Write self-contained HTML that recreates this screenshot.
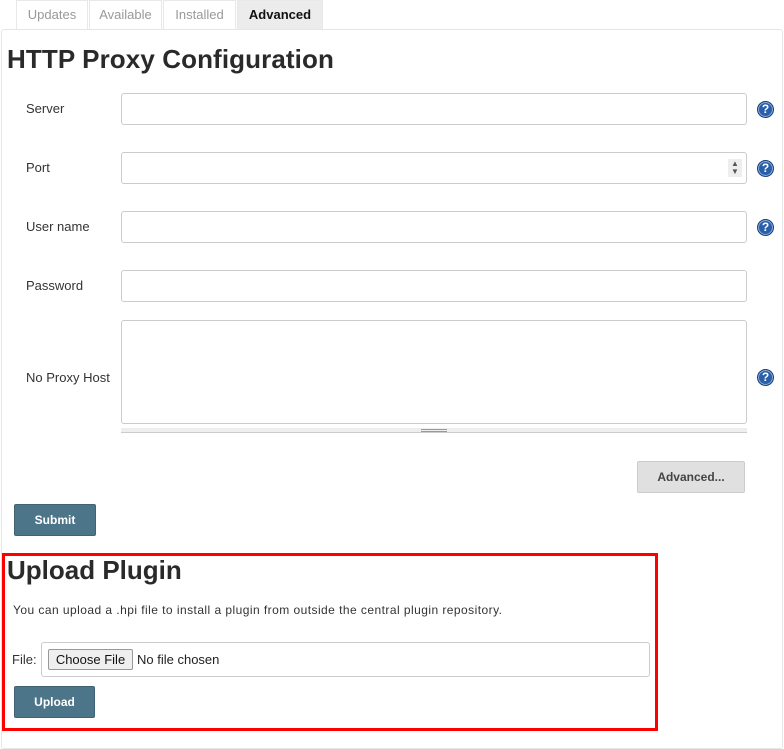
<!DOCTYPE html>
<html><head><style>
*{box-sizing:border-box;margin:0;padding:0}
body{width:784px;height:737px;background:#fff;font-family:"Liberation Sans",sans-serif;position:relative;overflow:hidden;color:#333}
.a{position:absolute}
.tab{position:absolute;top:0;height:29px;border:1px solid #e8e8e8;border-bottom:none;font-size:13px;color:#999;text-align:center;line-height:28px}
.lbl{position:absolute;left:26px;font-size:13px;color:#333}
.inp{position:absolute;left:121px;width:626px;height:32px;border:1px solid #ccc;border-radius:3px;background:#fff}
.help{position:absolute;left:757px;width:17px;height:17px;border-radius:50%;background:#2a5ea8;border:1px solid #1a3f7a;color:#fff;font-size:12px;font-weight:bold;text-align:center;line-height:15px;box-shadow:inset 0 0 0 1px #8fb2e0}
.btn{position:absolute;background:#4d7589;color:#fff;font-weight:bold;font-size:12px;text-align:center;border:1px solid #3f6275;border-radius:2px}
</style></head><body>
<div class="tab" style="left:16px;width:72px">Updates</div>
<div class="tab" style="left:89px;width:73px">Available</div>
<div class="tab" style="left:163px;width:73px">Installed</div>
<div class="tab" style="left:237px;width:86px;background:#ececec;color:#111;font-weight:bold">Advanced</div>
<div class="a" style="left:1px;top:29px;width:782px;height:720px;border:1px solid #e6e6e6;border-radius:3px"></div>
<div class="a" style="left:7px;top:44px;font-size:26px;font-weight:bold;color:#2a2a2a;letter-spacing:0.1px">HTTP Proxy Configuration</div>

<div class="lbl" style="top:101px">Server</div><div class="inp" style="top:93px"></div><div class="help" style="top:101px">?</div>
<div class="lbl" style="top:160px">Port</div><div class="inp" style="top:152px"><div class="a" style="right:4px;top:6px;width:14px;height:18px;background:#eee;font-size:8px;line-height:8px;text-align:center;color:#555;padding-top:1px">▲<br>▼</div></div><div class="help" style="top:160px">?</div>
<div class="lbl" style="top:219px">User name</div><div class="inp" style="top:211px"></div><div class="help" style="top:219px">?</div>
<div class="lbl" style="top:278px">Password</div><div class="inp" style="top:270px"></div>
<div class="lbl" style="top:370px">No Proxy Host</div><div class="inp" style="top:320px;height:104px"></div><div class="help" style="top:369px">?</div>
<div class="a" style="left:121px;top:428px;width:626px;height:5px;background:#eee;border-bottom:1px solid #ccc"><div class="a" style="left:300px;top:1px;width:26px;height:3px;border-top:1px solid #999;border-bottom:1px solid #999"></div></div>
<div class="a" style="left:637px;top:461px;width:108px;height:32px;background:#e0e0e0;border:1px solid #ccc;border-radius:2px;font-size:12px;font-weight:bold;color:#444;text-align:center;line-height:30px">Advanced...</div>
<div class="btn" style="left:14px;top:504px;width:82px;height:32px;line-height:30px">Submit</div>

<div class="a" style="left:2px;top:553px;width:656px;height:178px;border:3px solid #f00"></div>
<div class="a" style="left:7px;top:555px;font-size:26px;font-weight:bold;color:#2a2a2a">Upload Plugin</div>
<div class="a" style="left:13px;top:603px;font-size:12px;color:#333;letter-spacing:0.45px">You can upload a .hpi file to install a plugin from outside the central plugin repository.</div>
<div class="a" style="left:12px;top:652px;font-size:13px">File:</div>
<div class="a" style="left:41px;top:642px;width:609px;height:35px;border:1px solid #ccc;border-radius:3px"></div>
<div class="a" style="left:48px;top:649px;width:85px;height:21px;background:#efefef;border:1px solid #999;border-radius:2px;font-size:13px;color:#111;text-align:center;line-height:19px">Choose File</div>
<div class="a" style="left:137px;top:652px;font-size:13px;color:#222">No file chosen</div>
<div class="btn" style="left:14px;top:686px;width:81px;height:32px;line-height:30px">Upload</div>
</body></html>
